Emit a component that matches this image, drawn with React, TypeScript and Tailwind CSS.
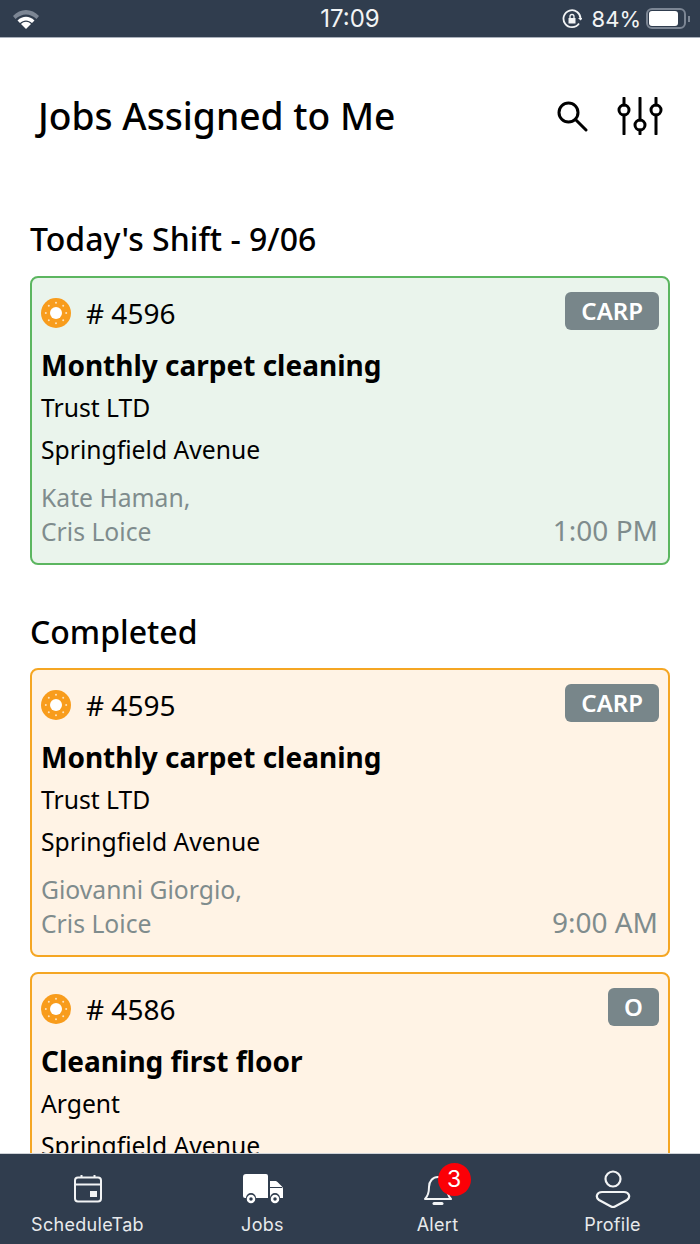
import React from "react";

const sans = "font-['Noto_Sans','Open_Sans',sans-serif]";

type Job = {
  id: string;
  tag: string;
  title: string;
  company: string;
  address: string;
  people?: string[];
  time?: string;
  done?: boolean;
};

function SunBadge() {
  const dots = [0, 45, 90, 135, 180, 225, 270, 315];
  return (
    <svg width="30" height="30" viewBox="0 0 30 30" className="shrink-0">
      <circle cx="15" cy="15" r="15" fill="#f89c1c" />
      <circle cx="15" cy="15" r="6" fill="#ffffff" />
      {dots.map((a) => (
        <circle
          key={a}
          cx={15 + 10.2 * Math.cos((a * Math.PI) / 180)}
          cy={15 + 10.2 * Math.sin((a * Math.PI) / 180)}
          r="1"
          fill="#fde3bd"
        />
      ))}
    </svg>
  );
}

function JobCard({ job }: { job: Job }) {
  return (
    <div
      className={`h-[289px] rounded-[8px] border-2 pl-[9px] pr-[9px] pt-[14px] ${
        job.done ? "border-[#f5a623] bg-[#fff3e5]" : "border-[#5cb660] bg-[#eaf4ec]"
      }`}
    >
      <div className="flex items-start justify-between">
        <div className="flex h-[41px] items-center gap-[15px]">
          <SunBadge />
          <span className="text-[28px] leading-none text-black">{`# ${job.id}`}</span>
        </div>
        <span className="flex h-[38px] items-center rounded-[6px] bg-[#78868a] px-[16px] text-[24px] font-semibold text-white">
          {job.tag}
        </span>
      </div>
      <div className="mt-[12px] text-[28px] leading-[40px] font-bold text-black">{job.title}</div>
      <div className="mt-[2px] text-[24.7px] leading-[42px] text-black">{job.company}</div>
      <div className="text-[24.7px] leading-[42px] text-black">{job.address}</div>
      {job.people && (
        <div className="mt-[10px] flex items-end justify-between text-[#7f8c8d]">
          <div className="text-[24.7px] leading-[34px]">
            {job.people.map((p) => (
              <div key={p}>{p}</div>
            ))}
          </div>
          <div className="pb-[2px] pr-[1px] text-[28px] leading-[34px]">{job.time}</div>
        </div>
      )}
    </div>
  );
}

const TABS = [
  {
    label: "ScheduleTab",
    icon: (
      <svg width="30" height="30" viewBox="0 0 30 30" fill="none" stroke="#f2f4f5" strokeWidth="2">
        <rect x="2" y="3.500" width="26" height="24" rx="3" />
        <path d="M2 10.500h26M8.500 1v3M21.500 1v3" />
        <rect x="17" y="17" width="7" height="6" fill="#f2f4f5" stroke="none" />
      </svg>
    ),
  },
  {
    label: "Jobs",
    icon: (
      <svg width="40" height="30" viewBox="0 0 40 30" fill="#ffffff">
        <path d="M3 0h20a2 2 0 0 1 2 2v22H13a5 5 0 0 0-10 0H2a2 2 0 0 1-2-2V3a3 3 0 0 1 3-3z" />
        <path d="M27 7h5c1 0 2 .500 2.500 1l4.500 4.500c.700.700 1 1.500 1 2.500v9h-3a5 5 0 0 0-10 0z" />
        <circle cx="8" cy="25" r="3" fill="none" stroke="#ffffff" strokeWidth="2.500" />
        <circle cx="32" cy="25" r="3" fill="none" stroke="#ffffff" strokeWidth="2.500" />
        <path d="M27 13.500h12" stroke="#303d4e" strokeWidth="1" />
      </svg>
    ),
  },
  {
    label: "Alert",
    icon: (
      <div className="relative h-[36px] w-[28px]">
        <svg width="28" height="36" viewBox="0 0 28 36" fill="none" stroke="#f2f4f5" strokeWidth="2">
          <path d="M1 28c3-3 4-6 4-12 0-6 4-10 9-10s9 4 9 10c0 6 1 9 4 12z" strokeLinejoin="round" />
          <path d="M10 32.500h8" strokeWidth="3" strokeLinecap="round" />
        </svg>
        <span className="absolute -top-[8px] left-[14px] flex h-[33px] w-[33px] items-center justify-center rounded-full bg-[#fb0007] font-['Inter'] text-[23px] text-white">
          3
        </span>
      </div>
    ),
  },
  {
    label: "Profile",
    icon: (
      <svg width="36" height="38" viewBox="0 0 36 38" fill="none" stroke="#f2f4f5" strokeWidth="2.200">
        <circle cx="18" cy="9" r="7.500" />
        <path d="M7 22h22c5 0 7 5 3 8l-12 6.500a4 4 0 0 1-4 0L4 30c-4-3-2-8 3-8z" strokeLinejoin="round" />
      </svg>
    ),
  },
];

export default function App() {
  return (
    <div className={`flex h-[1244px] w-[700px] flex-col overflow-hidden bg-white ${sans}`}>
      {/* Status bar */}
      <div className="flex h-[38px] shrink-0 items-center border-b border-b-[#a9b0bb] bg-[#303d4e] px-[10px] font-['Inter'] text-[#f2f4f5]">
        <div className="flex-1 pl-[3px]">
          <svg width="26" height="20" viewBox="0 0 26 20">
            <path d="M0 7C7-1 19-1 26 7l-2.500 3C17 4 9 4 2.500 10z" fill="#7c8694" />
            <path d="M4.500 11.500c5-5 12-5 17 0L19 14c-3.500-3.500-8.500-3.500-12 0z" fill="#ffffff" />
            <path d="M8 15c3-3 7-3 10 0l-5 5z" fill="#ffffff" />
          </svg>
        </div>
        <span className="-ml-[3px] text-[24px] leading-none">17:09</span>
        <div className="flex flex-1 items-center justify-end">
          <svg width="20" height="20" viewBox="0 0 20 20" fill="none" stroke="#f2f4f5" strokeWidth="1.800" className="mr-[10px]">
            <path d="M17 14.500A8.500 8.500 0 1 1 18.500 10" />
            <path d="M16 9l2.500 2.500L21 9" fill="#f2f4f5" stroke="none" />
            <rect x="6.500" y="9" width="7" height="5.500" fill="#f2f4f5" stroke="none" />
            <path d="M8 9V7.500a2 2 0 0 1 4 0V9" strokeWidth="1.300" />
          </svg>
          <span className="text-[22px] leading-none">84%</span>
          <div className="ml-[5px] flex h-[21px] w-[40px] items-center rounded-[6px] border-2 border-[#7c8694] p-[1px]">
            <div className="h-full w-[29px] rounded-[3px] bg-white" />
          </div>
          <div className="ml-[2px] h-[6px] w-[2px] bg-[#7c8694]" />
        </div>
      </div>

      {/* Page content, cut off by the tab bar */}
      <div className="min-h-0 flex-1 overflow-hidden px-[30px]">
        <div className="mt-[53px] flex h-[50px] items-center justify-between pl-[8px] pr-[7px]">
          <h1 className="text-[37.2px] leading-none font-medium text-black">Jobs Assigned to Me</h1>
          <div className="flex items-center gap-[29px]">
            <svg width="32" height="32" viewBox="0 0 32 32" fill="none" stroke="#000000" strokeWidth="3">
              <circle cx="12.500" cy="12.500" r="9.500" />
              <path d="M19.500 19.500L30 30" strokeLinecap="round" />
            </svg>
            <svg width="46" height="38" viewBox="0 0 46 38" fill="none" stroke="#000000" strokeWidth="3">
              <path d="M7 1v7M7 18v19M23 1v22M23 33v4M39 1v7M39 18v19" strokeLinecap="round" />
              <circle cx="7" cy="13" r="5" />
              <circle cx="23" cy="28" r="5" />
              <circle cx="39" cy="13" r="5" />
            </svg>
          </div>
        </div>

        <h2 className="mt-[76px] h-[44px] text-[32px] leading-[44px] font-medium text-black">Today's Shift - 9/06</h2>
        <div className="mt-[15px]">
          <JobCard
            job={{
              id: "4596",
              tag: "CARP",
              title: "Monthly carpet cleaning",
              company: "Trust LTD",
              address: "Springfield Avenue",
              people: ["Kate Haman,", "Cris Loice"],
              time: "1:00 PM",
            }}
          />
        </div>

        <h2 className="mt-[45px] h-[44px] text-[32px] leading-[44px] font-medium text-black">Completed</h2>
        <div className="mt-[14px] flex flex-col gap-[15px]">
          <JobCard
            job={{
              id: "4595",
              tag: "CARP",
              title: "Monthly carpet cleaning",
              company: "Trust LTD",
              address: "Springfield Avenue",
              people: ["Giovanni Giorgio,", "Cris Loice"],
              time: "9:00 AM",
              done: true,
            }}
          />
          <JobCard
            job={{
              id: "4586",
              tag: "O",
              title: "Cleaning first floor",
              company: "Argent",
              address: "Springfield Avenue",
              done: true,
            }}
          />
        </div>
      </div>

      {/* Tab bar */}
      <div className="grid h-[91px] shrink-0 grid-cols-4 border-t border-t-[#cfd3d8] bg-[#303d4e] font-['Inter']">
        {TABS.map((t) => (
          <div key={t.label} className="flex flex-col items-center justify-end pb-[8px]">
            <div className="flex h-[44px] items-center">{t.icon}</div>
            <span className="mt-[3px] text-[18px] leading-[22px] tracking-[0.3px] text-[#e8eaec]">{t.label}</span>
          </div>
        ))}
      </div>
    </div>
  );
}
